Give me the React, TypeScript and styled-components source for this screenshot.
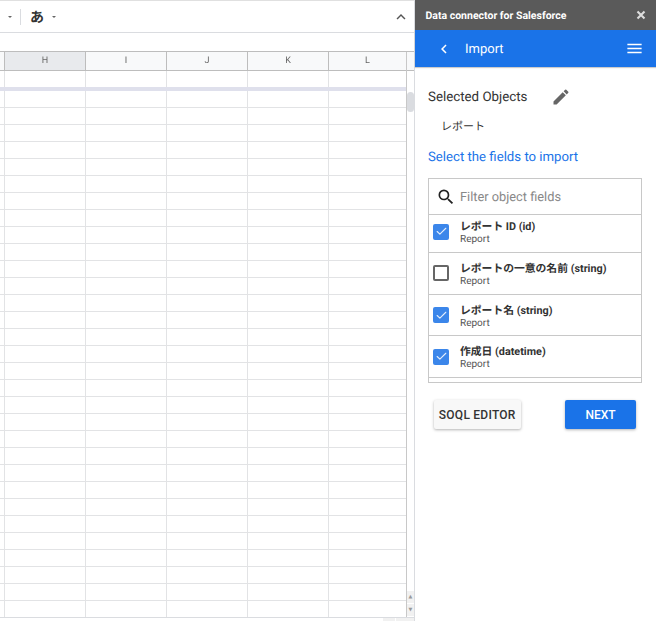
import React from "react";
import styled, { createGlobalStyle } from "styled-components";
import { Check } from "lucide-react";

const Global = createGlobalStyle`
  *, *::before, *::after { box-sizing: border-box; }
  html, body { margin: 0; padding: 0; background: #fff; }
  body { font-family: "Roboto", "Noto Sans CJK JP", sans-serif; overflow: hidden; text-rendering: geometricPrecision; }
`;
const Page = styled.div`
  width: 656px; height: 621px; display: flex; overflow: hidden; background: #fff;
`;
const Sheet = styled.div`
  width: 415px; height: 621px; flex: none; display: flex; flex-direction: column; overflow: hidden;
  border-right: 1px solid #dadce0; border-top: 1px solid #e0e0e0;
`;
const Toolbar = styled.div`
  height: 32px; flex: none; display: flex; align-items: center; border-bottom: 1px solid #dadce0;
  padding: 0 4px 0 8px;
`;
const Caret = styled.span`
  width: 0; height: 0; border-left: 2px solid transparent; border-right: 2px solid transparent;
  border-top: 2px solid #666; flex: none;
`;
const Divider = styled.span`
  width: 1px; height: 16px; background: #dadce0; margin: 0 9px 0 8px; flex: none;
`;
const Kana = styled.span`
  font: 700 14px "Noto Sans CJK JP", sans-serif; color: #333; margin-right: 8px;
`;
const Spacer = styled.span` flex: 1; `;
const FormulaBar = styled.div`
  height: 19px; flex: none; border-bottom: 1px solid #bdbdbd;
`;
const GridArea = styled.div` height: 565px; flex: none; display: flex; overflow: hidden; `;
const Columns = styled.div`
  width: 407px; flex: none; display: flex; flex-direction: column; border-right: 1px solid #c8c8c8;
  overflow: hidden;
`;
const gridCols = "4px 80px 80px 80px 80px 77px";
const HeaderRow = styled.div`
  height: 19px; flex: none; display: grid; grid-template-columns: ${gridCols}; column-gap: 1px;
  background: #bdbdbd; border-bottom: 1px solid #bdbdbd;
`;
const HeaderCell = styled.div<{ $active?: boolean }>`
  background: ${(p) => (p.$active ? "#e8eaed" : "#f8f9fa")};
  font: 9px "Roboto", sans-serif; color: #666; display: flex; align-items: center; justify-content: center;
`;
const HeaderLabel = styled.span` filter: grayscale(1); `;
const Row = styled.div<{ $first?: boolean }>`
  height: ${(p) => (p.$first ? "16px" : "17px")}; flex: none; display: grid;
  grid-template-columns: ${gridCols}; column-gap: 1px;
  background: #e2e3e5; padding-bottom: ${(p) => (p.$first ? "0" : "1px")};
`;
const Cell = styled.div` background: #fff; `;
const Freeze = styled.div` height: 4px; flex: none; background: #dfe0ec; `;
const Track = styled.div`
  width: 7px; flex: none; display: flex; flex-direction: column;
`;
const TrackHead = styled.div`
  height: 19px; flex: none; background: #f8f9fa; border-bottom: 1px solid #bdbdbd;
`;
const TrackBody = styled.div` flex: 1; padding-top: 21px; `;
const Thumb = styled.div`
  width: 7px; height: 20px; border-radius: 4px; background: #dadce0;
`;
const Arrow = styled.div`
  height: 12px; flex: none; margin-bottom: 1px; background: #f1f1f1; display: flex;
  align-items: center; justify-content: center; color: #999; font: 5px "DejaVu Sans", sans-serif;
`;
const BottomStrip = styled.div`
  height: 4px; flex: none; border-top: 1px solid #dadce0; display: flex; justify-content: flex-end; gap: 1px;
`;
const StripButton = styled.span<{ $w: number }>`
  width: ${(p) => p.$w}px; background: #f1f1f1;
`;
const Panel = styled.div`
  width: 241px; height: 621px; flex: none; display: flex; flex-direction: column; background: #fff;
`;
const TitleBar = styled.div`
  height: 30px; flex: none; background: #5a5a5a; display: flex; align-items: center;
  justify-content: space-between; padding: 0 8px 0 10.5px;
  color: #fff; font: 700 10.5px "Roboto", sans-serif;
`;
const NavBar = styled.div`
  height: 37px; flex: none; background: #1a73e8; color: #fff; display: flex; align-items: center;
  padding: 0 12px 0 20px; box-shadow: 0 1px 1px rgba(0,0,0,.2);
`;
const NavTitle = styled.span`
  font: 400 13px "Roboto", sans-serif; margin-left: 12px; padding-top: 2px; flex: 1;
`;
const Body = styled.div`
  flex: 1; display: flex; flex-direction: column; padding: 0 14px 0 13px;
`;
const SelectedRow = styled.div`
  display: flex; align-items: center; margin-top: 20px; height: 20px;
  font: 13.3px "Roboto", sans-serif; color: #333;
`;
const EditIcon = styled.span` margin-left: 24px; display: flex; color: #666; `;
const ObjectName = styled.div`
  margin: 9px 0 0 13px; height: 20px;
  font: 11px/20px "Noto Sans CJK JP", sans-serif; color: #333;
`;
const Prompt = styled.div`
  margin-top: 12px; height: 20px; font: 13.2px/20px "Roboto", sans-serif; color: #1a73e8;
`;
const FieldBox = styled.div`
  margin-top: 10px; width: 214px; height: 205px; border: 1px solid #c8c8c8;
  display: flex; flex-direction: column; overflow: hidden;
`;
const FilterRow = styled.div`
  height: 36px; flex: none; display: flex; align-items: center; padding-left: 7px; gap: 4px;
  border-bottom: 1px solid #c8c8c8; color: #888; font: 12.8px "Roboto", sans-serif;
`;
const FilterLabel = styled.span` padding-top: 2px; `;
const SearchIcon = styled.svg` color: #222; flex: none; `;
const FieldList = styled.div`
  flex: 1; min-height: 0; overflow: hidden; display: flex; flex-direction: column;
`;
const FieldRow = styled.div`
  height: 41.67px; flex: none; display: flex; align-items: center; padding-left: 4px;
  border-bottom: 1px solid #c8c8c8;
  &:first-child { margin-top: -3.5px; }
`;
const Box = styled.span<{ $on: boolean }>`
  width: 16px; height: 16px; border-radius: 2px; flex: none; display: flex;
  align-items: center; justify-content: center; color: #e4eefc;
  background: ${(p) => (p.$on ? "#3b86ea" : "#fff")};
  border: ${(p) => (p.$on ? "0" : "2px solid #666")};
`;
const FieldText = styled.div` margin-left: 11px; padding-top: 3px; display: flex; flex-direction: column; `;
const FieldName = styled.span`
  font: 700 10.8px/13px "Roboto", "Noto Sans CJK JP", sans-serif; color: #333;
`;
const FieldSub = styled.span` font: 10px/12px "Roboto", sans-serif; color: #555; margin-top: 1px; `;
const Buttons = styled.div`
  display: flex; justify-content: space-between; margin-top: 17px; padding: 0 6px 0 6px;
`;
const Btn = styled.button<{ $primary?: boolean }>`
  height: 29px; border: 0; border-radius: 2px; padding: 0; font: 500 12px "Roboto", sans-serif;
  letter-spacing: ${(p) => (p.$primary ? "0" : "0.25px")};
  width: ${(p) => (p.$primary ? "71px" : "86.5px")};
  background: ${(p) => (p.$primary ? "#1a73e8" : "#f8f8f8")};
  color: ${(p) => (p.$primary ? "#fff" : "#333")};
  box-shadow: 0 1px 3px rgba(0,0,0,.3);
`;

const columns = ["", "H", "I", "J", "K", "L"];
const fields = [
  { name: "レポート ID (id)", on: true },
  { name: "レポートの一意の名前 (string)", on: false },
  { name: "レポート名 (string)", on: true },
  { name: "作成日 (datetime)", on: true },
];

const GridRow = ({ first }: { first?: boolean }) => (
  <Row $first={first}>{columns.map((c, i) => <Cell key={i} />)}</Row>
);

export default function App() {
  return (
    <Page>
      <Global />
      <Sheet>
        <Toolbar>
          <Caret />
          <Divider />
          <Kana>あ</Kana>
          <Caret />
          <Spacer />
          <svg width="18" height="18" viewBox="0 0 24 24" fill="#555">
            <path d="M12 8l-6 6 1.41 1.41L12 10.83l4.59 4.58L18 14z" />
          </svg>
        </Toolbar>
        <FormulaBar />
        <GridArea>
          <Columns>
            <HeaderRow>
              {columns.map((c, i) => (
                <HeaderCell key={i} $active={c === "H"}><HeaderLabel>{c}</HeaderLabel></HeaderCell>
              ))}
            </HeaderRow>
            <GridRow first />
            <Freeze />
            {Array.from({ length: 31 }, (_, i) => <GridRow key={i} />)}
          </Columns>
          <Track>
            <TrackHead />
            <TrackBody><Thumb /></TrackBody>
            <Arrow>▲</Arrow>
            <Arrow>▼</Arrow>
          </Track>
        </GridArea>
        <BottomStrip>
          <StripButton $w={12} />
          <StripButton $w={18} />
        </BottomStrip>
      </Sheet>
      <Panel>
        <TitleBar>
          <span>Data connector for Salesforce</span>
          <svg width="14" height="14" viewBox="0 0 24 24" fill="none" stroke="#ddd" strokeWidth="3.6">
            <path d="M6 6l12 12M18 6L6 18" />
          </svg>
        </TitleBar>
        <NavBar>
          <svg width="18" height="18" viewBox="0 0 24 24" fill="currentColor">
            <path d="M15.41 7.41 14 6l-6 6 6 6 1.41-1.41L10.83 12z" />
          </svg>
          <NavTitle>Import</NavTitle>
          <svg width="19" height="19" viewBox="0 0 24 24" fill="currentColor">
            <path d="M3 18h18v-2H3v2zm0-5h18v-2H3v2zm0-7v2h18V6H3z" />
          </svg>
        </NavBar>
        <Body>
          <SelectedRow>
            Selected Objects
            <EditIcon>
              <svg width="20" height="20" viewBox="0 0 24 24" fill="currentColor">
                <path d="M3 17.25V21h3.75L17.81 9.94l-3.75-3.75L3 17.25zM20.71 7.04a1 1 0 0 0 0-1.41l-2.34-2.34a1 1 0 0 0-1.41 0l-1.83 1.83 3.75 3.75 1.83-1.83z" />
              </svg>
            </EditIcon>
          </SelectedRow>
          <ObjectName>レポート</ObjectName>
          <Prompt>Select the fields to import</Prompt>
          <FieldBox>
            <FilterRow>
              <SearchIcon width="20" height="20" viewBox="0 0 24 24" fill="currentColor">
                <path d="M15.5 14h-.79l-.28-.27A6.47 6.47 0 0 0 16 9.5 6.5 6.5 0 1 0 9.5 16c1.61 0 3.09-.59 4.23-1.57l.27.28v.79l5 4.99L20.49 19l-4.99-5zm-6 0C7.01 14 5 11.99 5 9.5S7.01 5 9.5 5 14 7.01 14 9.5 11.99 14 9.5 14z" />
              </SearchIcon>
              <FilterLabel>Filter object fields</FilterLabel>
            </FilterRow>
            <FieldList>
              {fields.map((f) => (
                <FieldRow key={f.name}>
                  <Box $on={f.on}>{f.on && <Check size={13} strokeWidth={2} />}</Box>
                  <FieldText>
                    <FieldName>{f.name}</FieldName>
                    <FieldSub>Report</FieldSub>
                  </FieldText>
                </FieldRow>
              ))}
            </FieldList>
          </FieldBox>
          <Buttons>
            <Btn>SOQL EDITOR</Btn>
            <Btn $primary>NEXT</Btn>
          </Buttons>
        </Body>
      </Panel>
    </Page>
  );
}
